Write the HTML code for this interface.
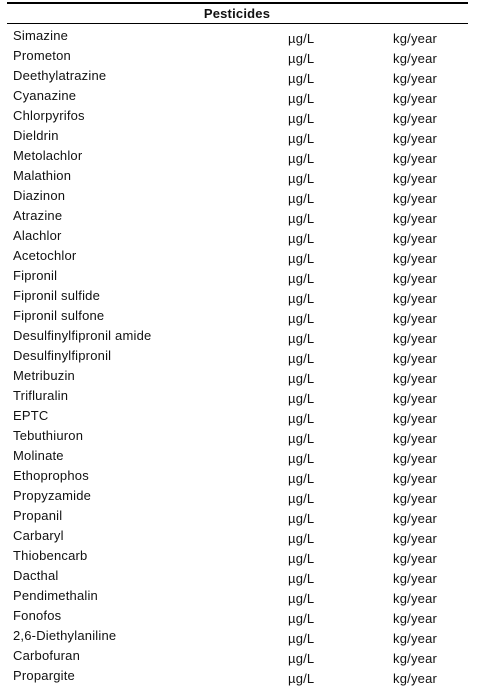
<!DOCTYPE html>
<html><head><style>
body{margin:0;width:480px;height:686px;background:#fff;font-family:"Liberation Sans",sans-serif;font-size:13px;letter-spacing:0.2px;color:#111;position:relative;overflow:hidden}
.l{position:absolute;left:7px;width:461px;background:#000}
.r{position:absolute;left:0;width:480px;height:20px}
.r span{position:absolute;white-space:nowrap}
.a{left:13px;top:0}
.b{left:288px;top:3px}
.c{left:393px;top:3px}
</style></head><body>
<div class="l" style="top:2px;height:2px"></div>
<div style="position:absolute;top:6px;left:0;width:474px;text-align:center;font-weight:bold">Pesticides</div>
<div class="l" style="top:23px;height:1px"></div>
<div id="t"></div>
<script>
var n=["Simazine","Prometon","Deethylatrazine","Cyanazine","Chlorpyrifos","Dieldrin","Metolachlor","Malathion","Diazinon","Atrazine","Alachlor","Acetochlor","Fipronil","Fipronil sulfide","Fipronil sulfone","Desulfinylfipronil amide","Desulfinylfipronil","Metribuzin","Trifluralin","EPTC","Tebuthiuron","Molinate","Ethoprophos","Propyzamide","Propanil","Carbaryl","Thiobencarb","Dacthal","Pendimethalin","Fonofos","2,6-Diethylaniline","Carbofuran","Propargite"];
var h="";n.forEach(function(x,i){h+='<div class="r" style="top:'+(28+i*20)+'px"><span class="a">'+x+'</span><span class="b">µg/L</span><span class="c">kg/year</span></div>';});
document.getElementById("t").innerHTML=h;
</script>
</body></html>
